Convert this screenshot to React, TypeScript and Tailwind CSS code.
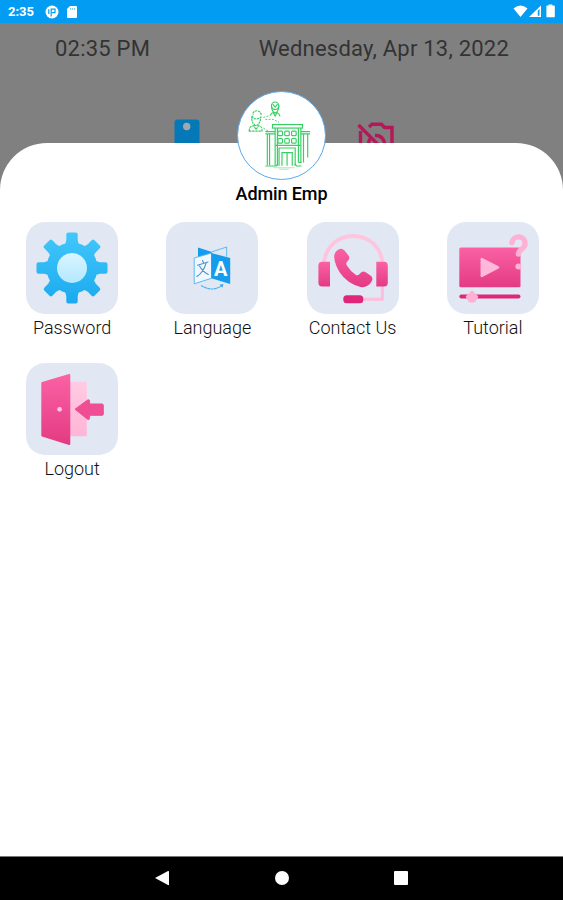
import React from "react";

const TILE_SVG = "block w-[92px] h-[92px]";

const Gradients = () => (
  <svg width="0" height="0" className="absolute" aria-hidden="true">
    <defs>
      <linearGradient id="pink" x1="0" y1="0" x2="0" y2="1">
        <stop offset="0" stopColor="#fb61a4" />
        <stop offset="1" stopColor="#e33b83" />
      </linearGradient>
      <linearGradient id="lightPink" x1="0" y1="0" x2="0" y2="1">
        <stop offset="0" stopColor="#ffcbe3" />
        <stop offset="1" stopColor="#ffb5d7" />
      </linearGradient>
      <linearGradient id="blue" x1="0" y1="0" x2="0" y2="1">
        <stop offset="0" stopColor="#42c8fb" />
        <stop offset="1" stopColor="#1ba9ee" />
      </linearGradient>
      <linearGradient id="lightBlue" x1="0" y1="0" x2="0" y2="1">
        <stop offset="0" stopColor="#d9f5ff" />
        <stop offset="1" stopColor="#b4e8ff" />
      </linearGradient>
    </defs>
  </svg>
);

const PasswordIcon = () => (
  <svg viewBox="0 0 92 92" className={TILE_SVG}>
    <mask id="gearMask">
      <rect width="92" height="92" fill="#000" />
      <circle cx="46" cy="46" r="25.5" fill="#fff" />
      {[0, 45, 90, 135, 180, 225, 270, 315].map((angle) => (
        <path
          key={angle}
          d="M37 25 Q40 22 40.3 18 V12.5 Q40.3 10.5 42.3 10.5 H49.7 Q51.7 10.5 51.7 12.5 V18 Q52 22 55 25 Z"
          fill="#fff"
          transform={`rotate(${angle} 46 46)`}
        />
      ))}
    </mask>
    <rect x="9" y="9" width="74" height="74" fill="url(#blue)" mask="url(#gearMask)" />
    <circle cx="46" cy="46" r="15" fill="url(#lightBlue)" />
  </svg>
);

const LanguageIcon = () => (
  <svg viewBox="0 0 92 92" className={TILE_SVG}>
    <path d="M32 25.5 L46 30 L45.5 32 L32 35 Z" fill="#169cec" />
    <path d="M46 29.8 L60.7 25 V34.5" fill="none" stroke="#4eb2ee" strokeWidth="0.9" />
    <path d="M28.2 36 L45.5 31 V56.3 L28.2 61.8 Z" fill="#f1f7ff" stroke="#4eb2ee" strokeWidth="0.9" />
    <path d="M45.3 31 L64.2 36 V62 L45.3 56.3 Z" fill="#169cec" />
    <path
      d="M31.5 43.2 L42 40 M36.5 38.6 L37.6 41 M40 41.3 Q37.5 50 31 54.5 M33.5 44 Q37 50 42.3 52.4"
      fill="none"
      stroke="#4794c8"
      strokeWidth="1.1"
      strokeLinecap="round"
    />
    <text x="48" y="53.6" fontSize="20" fontWeight="700" fill="#fff">
      A
    </text>
    <path d="M35 63.4 Q46 70.5 56 63.5" fill="none" stroke="#4eb2ee" strokeWidth="1.2" strokeDasharray="3 .4" />
    <path d="M53.6 62.5 L57.5 62.2 L56.3 65.8 Z" fill="#34a7ed" />
  </svg>
);

const ContactIcon = () => (
  <svg viewBox="0 0 92 92" className={TILE_SVG}>
    <path
      d="M16.8 41 C19 24 31 14 46.2 14 C61.4 14 73.4 24 75.6 41"
      fill="none"
      stroke="#ffc5df"
      strokeWidth="4"
    />
    <path d="M75.4 63 V77.3 H55" fill="none" stroke="#ffbddb" strokeWidth="3" strokeLinejoin="round" />
    <path d="M15 39.8 H23 V64.5 H15 Q11.4 64.5 11.4 60.5 V43.8 Q11.4 39.8 15 39.8 Z" fill="url(#pink)" />
    <path d="M69.3 39.8 H77.2 Q80.8 39.8 80.8 43.8 V60.5 Q80.8 64.5 77.2 64.5 H69.3 Z" fill="url(#pink)" />
    <rect x="36.3" y="73.2" width="20" height="8" rx="3.5" fill="#df267b" />
    <path
      d="M31.5 27.4 Q35 25.5 37.5 28.5 L41.5 33.5 Q43.6 36.5 40.7 39 Q38.5 40.7 39.7 43.2 Q43.5 49.5 49 53 Q51.5 54 53.2 51.2 Q55.6 48.3 58.7 50.3 L63.8 53.8 Q66.6 56 64.7 59.3 Q61 66 53.5 65 Q40 61.5 32.6 50.3 Q27.8 42.5 27.2 35.3 Q27 29.7 31.5 27.4 Z"
      fill="url(#pink)"
    />
  </svg>
);

const TutorialIcon = () => (
  <svg viewBox="0 0 92 92" className={TILE_SVG}>
    <rect x="12.3" y="25.5" width="61.2" height="39.8" rx="1.5" fill="url(#pink)" />
    <path
      d="M34.8 37 L51 45.4 L34.8 54 Z"
      fill="#ffb8da"
      stroke="#ffb8da"
      strokeWidth="2.5"
      strokeLinejoin="round"
    />
    <rect x="12.3" y="72.6" width="61.2" height="4" rx="2" fill="#df267b" />
    <path d="M25 68.7 L31 74.6 L27.5 80 H22.5 L19 74.6 Z" fill="#ffb0d5" stroke="#ffb0d5" strokeLinejoin="round" />
    <path
      d="M65 20.8 C65.8 12.8 78.2 12.8 78 21.7 C77.9 27.4 71.4 27.5 71.4 32"
      fill="none"
      stroke="#ffb0d5"
      strokeWidth="5.4"
      strokeLinecap="round"
    />
    <circle cx="71.4" cy="44.6" r="3" fill="#ffb0d5" />
  </svg>
);

const LogoutIcon = () => (
  <svg viewBox="0 0 92 92" className={TILE_SVG}>
    <rect x="43" y="18.7" width="17.8" height="54.5" rx="1.2" fill="url(#lightPink)" />
    <path
      d="M16.3 20 L43.3 12 V81 L16.3 72.5 Z"
      fill="url(#pink)"
      stroke="url(#pink)"
      strokeWidth="2"
      strokeLinejoin="round"
    />
    <circle cx="33.6" cy="46.3" r="2.4" fill="#ffc5df" />
    <path
      d="M49 46.2 L61.6 37 Q63.6 36 63.6 38.5 V41 H76 Q77.3 41 77.3 42.3 V51 Q77.3 52.3 76 52.3 H63.6 V54.5 Q63.6 57.5 61.5 56.2 Z"
      fill="#ef4d94"
      stroke="#ef4d94"
      strokeLinejoin="round"
    />
  </svg>
);

const CompanyLogo = () => (
  <svg viewBox="0 0 89 89" className="block w-full h-full" fill="none" stroke="#36cf63" strokeWidth="1.2">
    <rect x="35.3" y="33.3" width="30.7" height="3.6" />
    <path d="M38 37 V75.5 M40.3 37 V75.5 M61.8 37 V72 M64.3 37 V72" />
    <path d="M28 40.5 H38 M28 42.8 H38 M64.3 40.5 H73.7 M64.3 42.8 H73.7 M30 43 V75 M32.3 43 V75 M71.3 43 V67 M67 43 V72" />
    {[40.8, 47.8, 54.8].map((x) => (
      <React.Fragment key={x}>
        <rect x={x} y="40" width="4.7" height="4.7" rx="1" />
        <rect x={x} y="47.6" width="4.7" height="4.7" rx="1" />
      </React.Fragment>
    ))}
    <path d="M38 54.6 H64 M42 75.5 V57.3 H58.5 V75.5 M45 75.5 V62 H55.5 V75.5 M50.2 62 V75.5" />
    <path d="M28 75.7 H39 L41 73.5 M58 73.5 L60 75.7 H65 M62 72 H65" />
    <path d="M36 77.5 H58 M42 79 H52" strokeWidth="0.7" opacity="0.6" />
    <circle cx="38" cy="14" r="3.8" />
    <path d="M34.2 14 Q34.5 20 38 21.5 Q41.6 20 41.8 14 M35.5 12.5 L38 15.5 L40.5 12.5 M33 24 Q34 21.5 36 21 L38 24.5 L40 21 Q42.3 22 43 25" />
    <path
      d="M15 22 Q17 18.5 20 19.3 Q23.5 20 24 24 M13.5 26 Q15 25 16 23 M14 27 Q14.4 33 18.5 34.6 Q23 32.5 23.5 25 M14 25 Q18 30 23.5 25.5 M11.5 40 Q11.3 35 16 34.5 L18.5 38.5 L21 34.5 Q25 35 24.5 40 Z"
      strokeDasharray="2.5 .7"
    />
    <path d="M26 26 L33 24 M28 28 H36 L42 31 M26 37 L31 40" strokeWidth="0.9" strokeDasharray="2 1.4" />
  </svg>
);

const menuItems = [
  { label: "Password", icon: <PasswordIcon /> },
  { label: "Language", icon: <LanguageIcon /> },
  { label: "Contact Us", icon: <ContactIcon /> },
  { label: "Tutorial", icon: <TutorialIcon /> },
  { label: "Logout", icon: <LogoutIcon /> },
];

const StatusBar = () => (
  <div className="flex items-center justify-between h-[23px] pl-2 pr-[7px] bg-[#039cf3] text-white">
    <div className="flex items-center">
      <span className="w-[37px] text-[13px] leading-none font-bold">2:35</span>
      <svg viewBox="0 0 14 14" className="w-3.5 h-3.5">
        <circle cx="7" cy="7" r="6.5" fill="#fff" />
        <path d="M6.2 11.5 V4.2 H10 V7.6 H7 M3.8 4.2 V9" fill="none" stroke="#039cf3" strokeWidth="1.2" />
      </svg>
      <svg viewBox="0 0 12 14" className="w-3 h-3.5 ml-[7px]">
        <path d="M4 1 H10 Q11 1 11 2 V12 Q11 13 10 13 H2 Q1 13 1 12 V4 Z" fill="#fff" />
        <path d="M4.5 3 V5 M6.5 3 V5 M8.5 3 V5" stroke="#039cf3" strokeWidth=".5" />
      </svg>
    </div>
    <svg viewBox="0 0 44 14" className="w-11 h-3.5 -mt-px">
      <path d="M1.5 4.5 Q8.5 -1.5 15.5 4.5 L8.5 13 Z" fill="#fff" />
      <path d="M17 13 L29 1.5 V13 Z" fill="#fff" />
      <path d="M25.8 6.7 L27.5 5 V11.8 H25.8 Z" fill="#039cf3" />
      <path d="M36.7 1.5 V0.5 H40.3 V1.5 H42 Q42.8 1.5 42.8 2.4 V12.4 Q42.8 13.3 42 13.3 H35.2 Q34.4 13.3 34.4 12.4 V2.4 Q34.4 1.5 35.2 1.5 Z" fill="#fff" />
    </svg>
  </div>
);

const NavigationBar = () => (
  <div className="flex items-center justify-center h-11 pr-0.5 pb-0.5 border-t border-[#777777] bg-black">
    <svg viewBox="0 0 16 16" className="w-4 h-4">
      <path d="M1 8 L14 1 Q15 .7 15 1.7 V14.5 Q15 15.5 14 15 Z" fill="#fff" />
    </svg>
    <div className="w-3.5 h-3.5 mx-[105px] rounded-full bg-white" />
    <div className="w-3.5 h-3.5 rounded-[1px] bg-white" />
  </div>
);

const App = () => {
  return (
    <div className="flex flex-col w-[563px] h-[900px] overflow-hidden bg-[#808080] font-['Roboto',sans-serif]">
      <Gradients />
      <StatusBar />

      <div className="h-[120px] shrink-0 overflow-hidden">
        <div className="flex justify-between pl-[55px] pr-[54px] pt-3 text-[22px] leading-7 tracking-[0.22px] text-[#333333]">
          <span>02:35 PM</span>
          <span>Wednesday, Apr 13, 2022</span>
        </div>
        <div className="flex pl-[174px] pt-[55px]">
          <svg viewBox="0 0 26 30" className="w-[26px] h-[30px]">
            <rect x="0.5" y="1.5" width="25" height="40" rx="3" fill="#0579b7" />
            <circle cx="12.7" cy="8.5" r="3.7" fill="#a0a8ac" />
          </svg>
          <svg
            viewBox="0 0 40 32"
            className="w-10 h-8 ml-[157px]"
            fill="none"
            stroke="#b51858"
            strokeWidth="3.4"
          >
            <path d="M1.5 7 L29 34.5 M3.5 13 V32 M12 9 L15 6.3 H24.5 L27.5 9.5 H35 V32 M18 17.5 Q27 17 28 28 M11.5 26 Q11.5 22.5 14 19.5" />
            <path d="M17 22.5 L24 30" strokeWidth="2" />
          </svg>
        </div>
      </div>

      <div className="flex flex-col items-center flex-1 rounded-t-[47px] bg-white">
        <div className="w-[89px] h-[89px] shrink-0 -mt-[52px] rounded-full border border-[#5ba9e8] bg-white overflow-hidden">
          <CompanyLogo />
        </div>
        <h1 className="mt-0.5 text-lg leading-6 font-medium tracking-[-0.1px] text-black">Admin Emp</h1>

        <div className="grid grid-cols-4 gap-y-[22.5px] w-full mt-4 pl-0.5">
          {menuItems.map((item) => (
            <button key={item.label} type="button" className="flex flex-col items-center h-[118px]">
              <div className="w-[92px] h-[92px] shrink-0 rounded-[19px] bg-[#e2e8f3]">{item.icon}</div>
              <span className="mt-0.5 text-lg leading-6 font-light text-[#111111]">{item.label}</span>
            </button>
          ))}
        </div>
      </div>

      <NavigationBar />
    </div>
  );
};

export default App;
